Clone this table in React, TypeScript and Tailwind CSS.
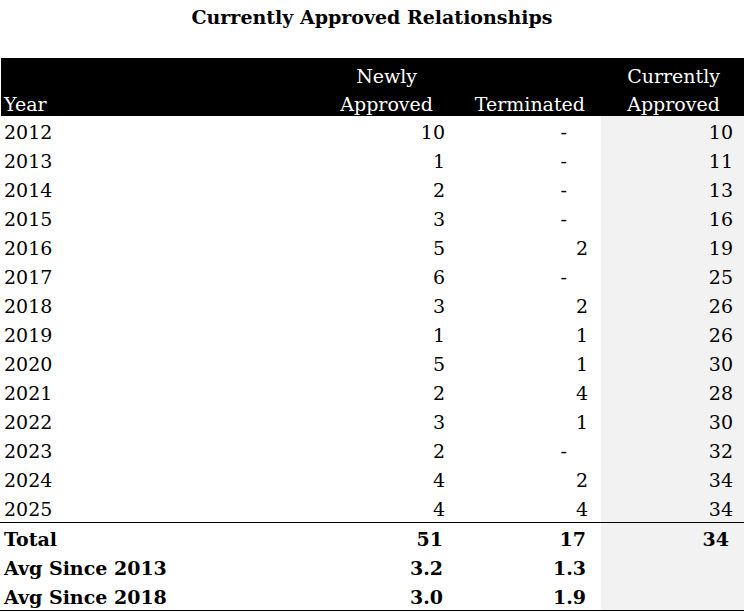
const rows: [string, string, string, string][] = [
  ["2012", "10", "-", "10"],
  ["2013", "1", "-", "11"],
  ["2014", "2", "-", "13"],
  ["2015", "3", "-", "16"],
  ["2016", "5", "2", "19"],
  ["2017", "6", "-", "25"],
  ["2018", "3", "2", "26"],
  ["2019", "1", "1", "26"],
  ["2020", "5", "1", "30"],
  ["2021", "2", "4", "28"],
  ["2022", "3", "1", "30"],
  ["2023", "2", "-", "32"],
  ["2024", "4", "2", "34"],
  ["2025", "4", "4", "34"],
];

const summary: [string, string, string, string][] = [
  ["Total", "51", "17", "34"],
  ["Avg Since 2013", "3.2", "1.3", ""],
  ["Avg Since 2018", "3.0", "1.9", ""],
];

const cols = "grid grid-cols-[301px_150px_150px_143px]";
const cell = "h-[29px] leading-[29px] pt-[2px]";

function DataRow({ row }: { row: [string, string, string, string] }) {
  const [year, added, ended, current] = row;
  return (
    <div className={cols}>
      <div className={`${cell} pl-[4px]`}>{year}</div>
      <div className={`${cell} text-right pr-[6px]`}>{added}</div>
      <div className={`${cell} text-right ${ended === "-" ? "pr-[34px]" : "pr-[13px]"}`}>
        {ended}
      </div>
      <div className={`${cell} text-right pr-[11px] bg-[#f2f2f2]`}>{current}</div>
    </div>
  );
}

function SummaryRow({ row }: { row: [string, string, string, string] }) {
  const [label, added, ended, current] = row;
  return (
    <div className={`${cols} font-bold`}>
      <div className={`${cell} pl-[4px]`}>{label}</div>
      <div className={`${cell} text-right pr-[8px]`}>{added}</div>
      <div className={`${cell} text-right pr-[15px]`}>{ended}</div>
      <div className={`${cell} text-right pr-[15px] bg-[#f2f2f2]`}>{current}</div>
    </div>
  );
}

export default function App() {
  return (
    <div className="w-[746px] h-[612px] bg-white text-black font-['DejaVu_Serif',serif] text-[19px]">
      {/* Title */}
      <div className="w-[744px] h-[58px] pt-[3px] text-center font-bold text-[19px] leading-[28px]">
        Currently Approved Relationships
      </div>

      <div className="w-[744px]">
        {/* Header */}
        <div className="grid grid-cols-[300px_150px_150px_143px] h-[58px] ml-[1px] w-[743px] bg-black text-white leading-[28px]">
          <div className="flex items-end pl-[3px]">
            <span className="mb-[-2px]">Year</span>
          </div>
          <div className="flex items-end justify-end pr-[18px]">
            <span className="text-center mb-[-2px]">
              Newly
              <br />
              Approved
            </span>
          </div>
          <div className="flex items-end justify-end pr-[16px]">
            <span className="mb-[-2px]">Terminated</span>
          </div>
          <div className="flex items-end justify-end pr-[24px]">
            <span className="text-center mb-[-2px]">
              Currently
              <br />
              Approved
            </span>
          </div>
        </div>

        {/* Yearly rows */}
        <div className="border-b border-black">
          {rows.map((r) => (
            <DataRow key={r[0]} row={r} />
          ))}
        </div>

        {/* Totals and averages */}
        <div className="border-b border-black">
          {summary.map((r) => (
            <SummaryRow key={r[0]} row={r} />
          ))}
        </div>
      </div>
    </div>
  );
}
